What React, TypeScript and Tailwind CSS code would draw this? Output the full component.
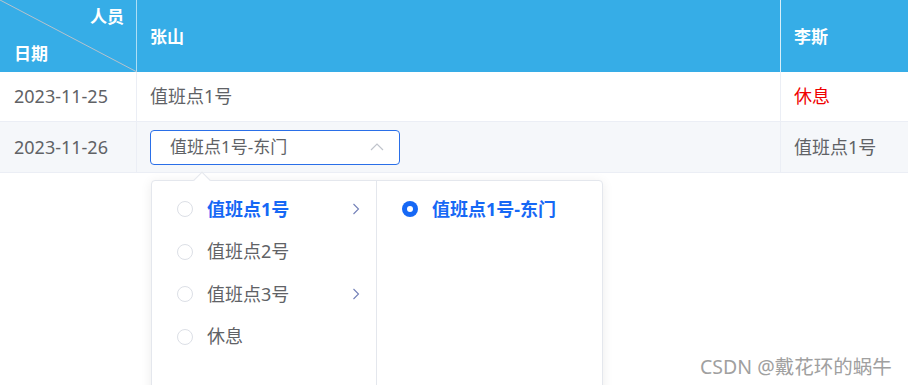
import React from 'react';

const font = { fontFamily: '"Noto Sans", "Noto Sans CJK SC", sans-serif' };

function Radio({ checked }: { checked?: boolean }) {
  if (checked) {
    return (
      <span className="flex h-4 w-4 items-center justify-center rounded-full bg-[#1668f5]">
        <span className="h-[6px] w-[6px] rounded-full bg-white" />
      </span>
    );
  }
  return <span className="h-4 w-4 rounded-full border border-[#dcdfe6] bg-white" />;
}

function Chevron() {
  return (
    <svg width="8" height="12" viewBox="0 0 8 12" fill="none">
      <path d="M1.5 1 L6.5 6 L1.5 11" stroke="#7380b8" strokeWidth="1.1" />
    </svg>
  );
}

const options = [
  { label: '值班点1号', active: true, more: true },
  { label: '值班点2号' },
  { label: '值班点3号', more: true },
  { label: '休息' },
];

export default function App() {
  return (
    <div className="relative h-[385px] w-[908px] overflow-hidden bg-white text-[18px] text-[#606266]" style={font}>
      {/* Table */}
      <div className="grid grid-cols-[137px_644px_1fr]">
        {/* Header */}
        <div className="relative h-[72px] border-r border-white/60 bg-[#36ade7] text-[17px] font-bold text-white">
          <svg className="absolute inset-0" width="137" height="72">
            <line x1="0" y1="0" x2="137" y2="72" stroke="#b6c2cc" strokeWidth="1" />
          </svg>
          <span className="absolute right-[12px] top-[4px]">人员</span>
          <span className="absolute left-[14px] top-[41px]">日期</span>
        </div>
        <div className="flex h-[72px] items-center border-r border-white/80 bg-[#36ade7] pl-[13px] pt-[2px] text-[17px] font-bold text-white">张山</div>
        <div className="flex h-[72px] items-center bg-[#36ade7] pl-[13px] pt-[2px] text-[17px] font-bold text-white">李斯</div>

        {/* Row 1 */}
        <div className="flex h-[50px] items-center border-b border-r border-[#ebeef5] pl-[14px]">2023-11-25</div>
        <div className="flex h-[50px] items-center border-b border-r border-[#ebeef5] pl-[13px]">值班点1号</div>
        <div className="flex h-[50px] items-center border-b border-[#ebeef5] pl-[13px] text-[#f00000]">休息</div>

        {/* Row 2 */}
        <div className="flex h-[51px] items-center border-b border-r border-[#ebeef5] bg-[#f5f7fa] pl-[14px]">2023-11-26</div>
        <div className="flex h-[51px] items-center border-b border-r border-[#ebeef5] bg-[#f5f7fa] pl-[13px]">
          <div className="flex h-[35px] w-[250px] items-center justify-between rounded-[4px] border border-[#2a6fe8] bg-white pl-[19px] pr-[15px] text-[17px]">
            <span>值班点1号-东门</span>
            <svg width="14" height="8" viewBox="0 0 14 8" fill="none">
              <path d="M1 7 L7 1 L13 7" stroke="#c0c4cc" strokeWidth="1.2" />
            </svg>
          </div>
        </div>
        <div className="flex h-[51px] items-center border-b border-[#ebeef5] bg-[#f5f7fa] pl-[13px]">值班点1号</div>
      </div>

      {/* Cascader dropdown */}
      <div className="absolute left-[151px] top-[180px] flex h-[230px] w-[452px] rounded-[4px] border border-[#e4e7ed] bg-white shadow-[0_2px_12px_rgba(0,0,0,0.08)]">
        <span className="absolute -top-[7px] left-[44px] h-3 w-3 rotate-45 border-l border-t border-[#e4e7ed] bg-white" />
        <div className="w-[225px] border-r border-[#e4e7ed] py-[7px]">
          {options.map((o) => (
            <div key={o.label} className="flex h-[42.5px] items-center pl-[25px] pr-[16px]">
              <Radio />
              <span className={`ml-[14px] flex-1 ${o.active ? 'font-bold text-[#1668f5]' : ''}`}>{o.label}</span>
              {o.more && <Chevron />}
            </div>
          ))}
        </div>
        <div className="flex-1 py-[7px]">
          <div className="flex h-[42.5px] items-center pl-[25px]">
            <Radio checked />
            <span className="ml-[14px] font-bold text-[#1668f5]">值班点1号-东门</span>
          </div>
        </div>
      </div>

      {/* Watermark */}
      <div className="absolute left-[700px] top-[352px] text-[19.5px] text-[#a0a0a0]">CSDN @戴花环的蜗牛</div>
    </div>
  );
}
